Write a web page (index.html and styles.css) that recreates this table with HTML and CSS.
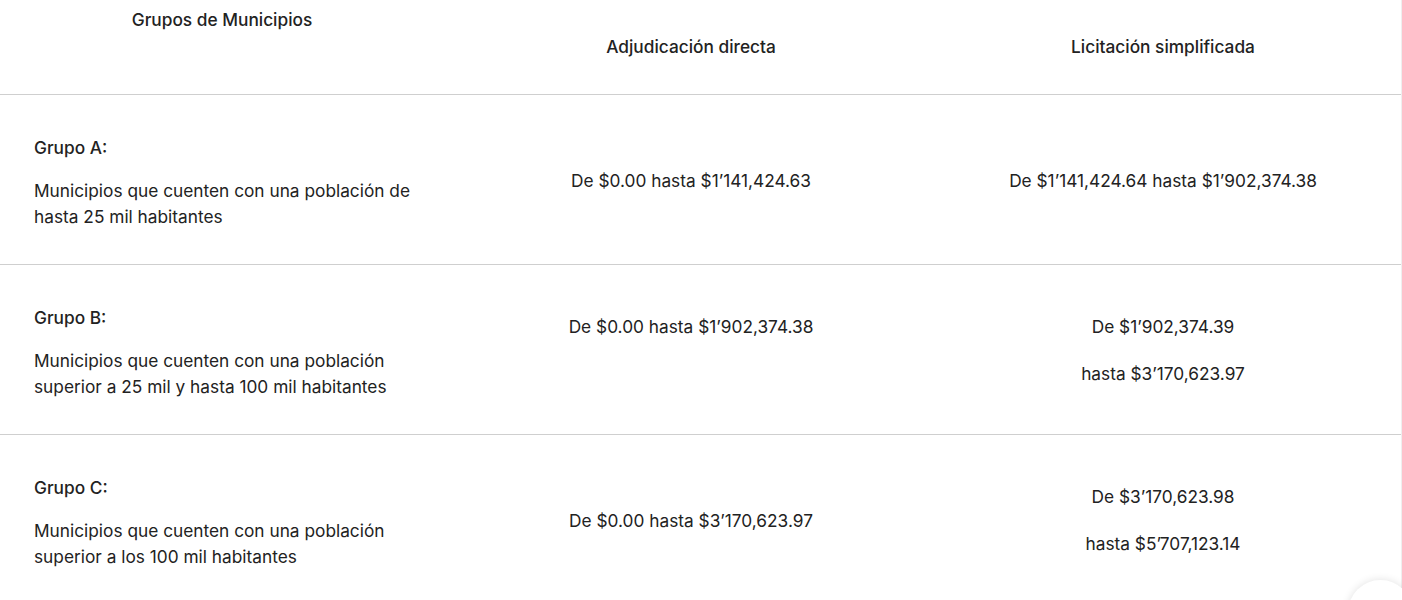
FILE: index.html
```html
<!DOCTYPE html>
<html lang="es">
<head>
<meta charset="utf-8">
<title>Montos de contratación por grupo de municipios</title>
<link rel="stylesheet" href="styles.css">
</head>
<body>
<div class="page">
  <div class="table">
    <div class="row head">
      <div class="cell c1 top">Grupos de Municipios</div>
      <div class="cell c2">Adjudicación directa</div>
      <div class="cell c3">Licitación simplificada</div>
    </div>

    <div class="row">
      <div class="cell c1">
        <p class="g-title">Grupo A:</p>
        <p class="g-desc">Municipios que cuenten con una población de hasta 25 mil habitantes</p>
      </div>
      <div class="cell c2"><p>De $0.00 hasta $1’141,424.63</p></div>
      <div class="cell c3"><p>De $1’141,424.64 hasta $1’902,374.38</p></div>
    </div>

    <div class="row">
      <div class="cell c1">
        <p class="g-title">Grupo B:</p>
        <p class="g-desc">Municipios que cuenten con una población superior a 25 mil y hasta 100 mil habitantes</p>
      </div>
      <div class="cell c2"><p>De $0.00 hasta $1’902,374.38</p><p>&nbsp;</p></div>
      <div class="cell c3"><p>De $1’902,374.39</p><p>hasta $3’170,623.97</p></div>
    </div>

    <div class="row">
      <div class="cell c1">
        <p class="g-title">Grupo C:</p>
        <p class="g-desc">Municipios que cuenten con una población superior a los 100 mil habitantes</p>
      </div>
      <div class="cell c2"><p>De $0.00 hasta $3’170,623.97</p></div>
      <div class="cell c3"><p>De $3’170,623.98</p><p>hasta $5’707,123.14</p></div>
    </div>
  </div>
</div>
<button class="float-btn" type="button" aria-label="Subir"></button>
</body>
</html>
```

FILE: styles.css
```css
html, body {
  margin: 0;
  padding: 0;
  background: #ffffff;
}

body {
  font-family: Inter, "Liberation Sans", Arial, sans-serif;
  font-size: 17.3px;
  line-height: 26px;
  color: #222222;
  overflow: hidden;
}

.page {
  width: 1401px;
  min-height: 600px;
  border-right: 1px solid #efefef;
}

.row {
  display: grid;
  grid-template-columns: 444px 494px 1fr;
  align-items: center;
  height: 170px;
  box-sizing: border-box;
  border-bottom: 1px solid #cfcfcf;
}

.row.head {
  height: 95px;
}

.cell {
  display: flex;
  flex-direction: column;
}

.cell p {
  margin: 0;
}

.c2,
.c3 {
  text-align: center;
  gap: 21px;
  padding-top: 2px;
}

.c3 {
  padding-right: 13px;
}

.c1 {
  padding-left: 34px;
  padding-right: 18px;
  padding-top: 5px;
  gap: 17px;
}

.head .cell {
  font-weight: 500;
  padding-top: 0;
}

.head .c1 {
  text-align: center;
  padding: 7px 0 0;
  align-self: start;
}

.g-title {
  font-weight: 500;
}

.float-btn {
  position: fixed;
  left: 1348px;
  top: 580px;
  width: 65px;
  height: 65px;
  border-radius: 50%;
  border: none;
  background: #ffffff;
  box-shadow: 0 0 8px rgba(0, 0, 0, 0.12);
  padding: 0;
}
```
